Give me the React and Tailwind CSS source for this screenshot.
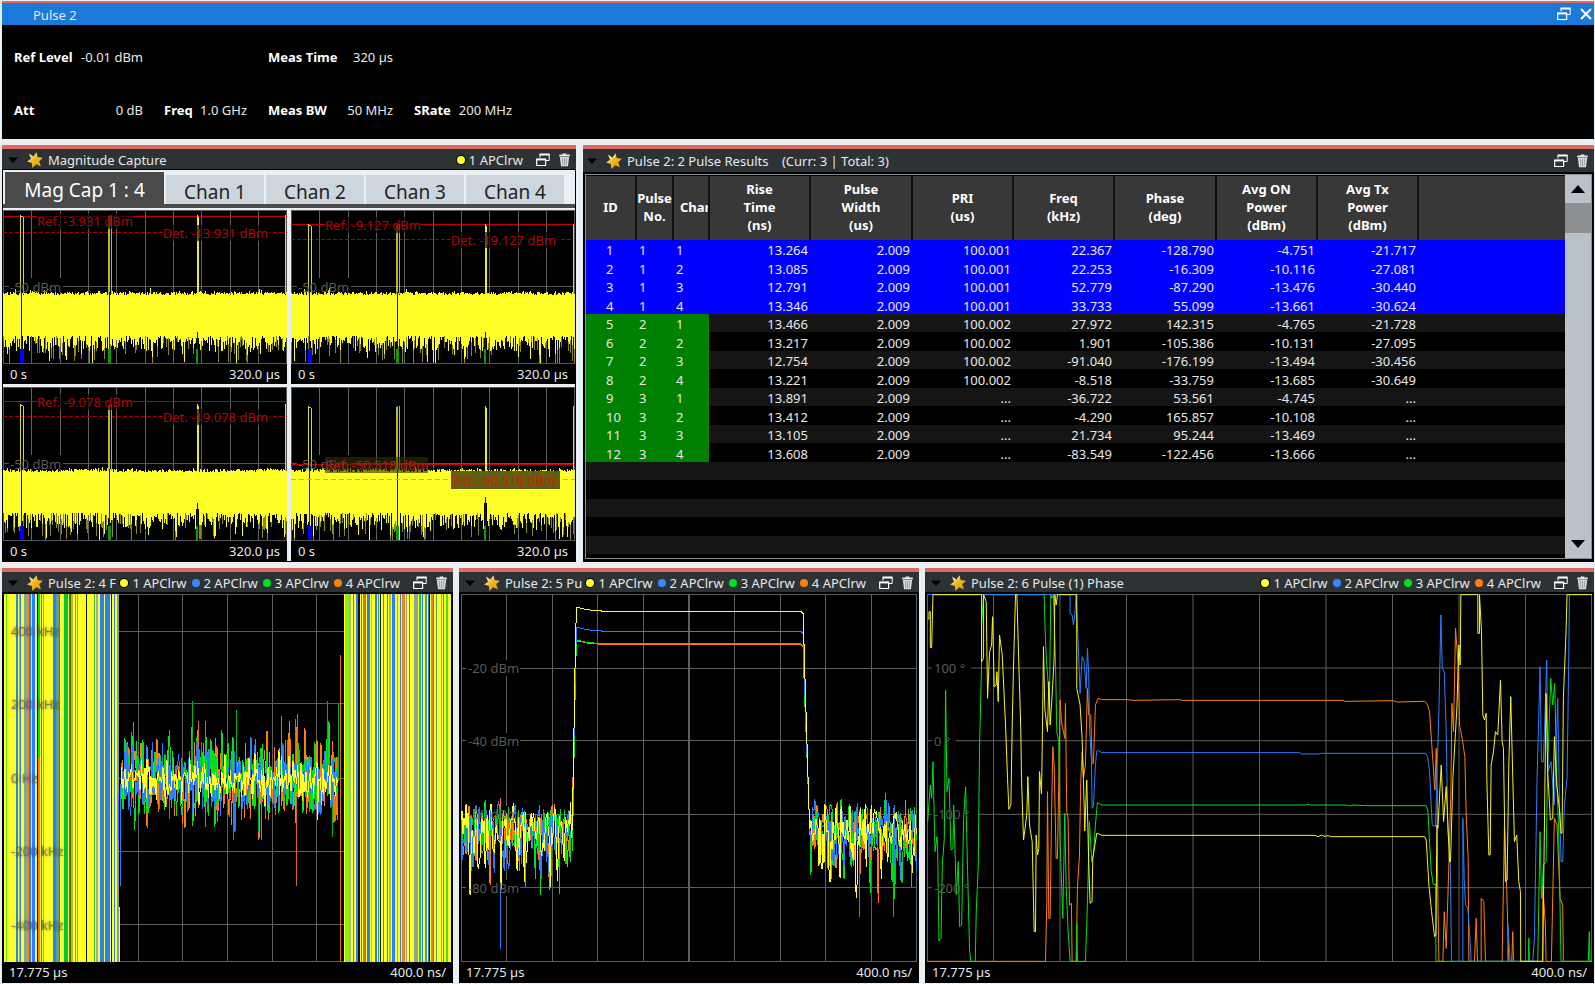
import clsx from 'clsx'

const YELLOW = '#ffff28'
const BLUE = '#2b7fff'
const GREEN = '#00e11e'
const ORANGE = '#ff7f0a'

// Small seeded generator so the noise looks the same on every render
function seeded(seed) {
  let s = seed
  return () => {
    s = (s * 1664525 + 1013904223) % 4294967296
    return s / 4294967296
  }
}

/* ---------- icons ---------- */

function StarIcon() {
  return (
    <svg viewBox="0 0 16 16" className="h-4 w-4 shrink-0" aria-hidden="true">
      <defs>
        <linearGradient id="star" x1="0" y1="0" x2="1" y2="1">
          <stop offset="0.15" stopColor="#fff6d0" />
          <stop offset="0.45" stopColor="#f2b61c" />
          <stop offset="1" stopColor="#e09a00" />
        </linearGradient>
      </defs>
      <path
        d="M2 1.6 6.3 4.4 9.6.3 10.6 5 16 5.8 12.2 9.2 14 14.6 9.2 12.2 5.4 16 4.8 11 .1 9.6 4 6.8Z"
        fill="url(#star)"
      />
    </svg>
  )
}

function RestoreIcon() {
  return (
    <svg viewBox="0 0 14 14" className="h-[14px] w-[14px]" fill="none" stroke="currentColor" aria-hidden="true">
      <path d="M4 4.5V1.5H13.2V7.5H10" strokeWidth="1" />
      <path d="M3.6 1.5H13.6" strokeWidth="2" />
      <path d="M.7 6.5H9.6V12.5H.7Z" strokeWidth="1.2" />
      <path d="M.2 6.4H10.1" strokeWidth="2" />
    </svg>
  )
}

function TrashIcon() {
  return (
    <svg viewBox="0 0 11 14" className="h-[14px] w-[11px]" aria-hidden="true">
      <path d="M3.6 1.6V.6H7.4V1.6H10.8V3.6H.2V1.6Z" fill="#e4e6e8" />
      <path d="M.9 4.1H10.1L9 13.2H2Z" fill="#dcdfe2" />
      <path d="M3.3 4.8 3.9 12.2M5.5 4.8V12.2M7.7 4.8 7.1 12.2" stroke="#7b8084" strokeWidth=".7" />
    </svg>
  )
}

/* ---------- panel chrome ---------- */

const CHANNELS = [
  { name: '1 APClrw', dot: 'bg-[#ffff28] h-[8px] w-[8px] ring-1 ring-black' },
  { name: '2 APClrw', dot: 'bg-[#3a86ff] h-[8px] w-[8px]' },
  { name: '3 APClrw', dot: 'bg-[#00e11e] h-[8px] w-[8px]' },
  { name: '4 APClrw', dot: 'bg-[#ff7f0a] h-[8px] w-[8px]' },
]

function Panel({ title, traces = 0, tall = false, children }) {
  return (
    <section className="flex min-w-0 flex-col border-t-4 border-[#df6b60] bg-black">
      <header className={clsx('flex items-center bg-[#2d3235] pr-[6px]', tall ? 'h-[23px] pl-[4px]' : 'h-[20px] pt-[1px] pl-[6px]')}>
        <button type="button" aria-label="Panel menu" className="flex h-4 w-[12px] shrink-0 items-center">
          <svg viewBox="0 0 10 6" className="h-[6px] w-[10px]" aria-hidden="true">
            <path d="M0 .5H10L5 6Z" fill="#000" />
          </svg>
        </button>
        <span className="w-[7px] shrink-0" />
        <StarIcon />
        <h2 className="ml-[5px] min-w-0 flex-1 overflow-hidden whitespace-pre">{title}</h2>
        <ul className="ml-[3px] flex shrink-0 gap-[5px]">
          {CHANNELS.slice(0, traces).map((c) => (
            <li key={c.name} className="flex items-center gap-[4px]">
              <span className={clsx('shrink-0 rounded-full', c.dot)} />
              {c.name}
            </li>
          ))}
        </ul>
        <button type="button" aria-label="Restore panel" className="ml-[13px] shrink-0 text-white">
          <RestoreIcon />
        </button>
        <button type="button" aria-label="Delete panel" className="ml-[9px] shrink-0">
          <TrashIcon />
        </button>
      </header>
      {children}
    </section>
  )
}

function XAxis({ left, right }) {
  return (
    <div className="flex h-[20px] items-center justify-between px-[7px]">
      <span>{left}</span>
      <span>{right}</span>
    </div>
  )
}

// y labels sit over the plot with a faint dark halo
function YLabel({ top, children }) {
  return (
    <span
      className="absolute left-[7px] -translate-y-1/2 text-[#707070d0] [text-shadow:0_0_3px_#0008]"
      style={{ top: `${top}%` }}
    >
      {children}
    </span>
  )
}

/* ---------- magnitude capture ---------- */

function magNoise(seed, bump) {
  const rnd = seeded(seed)
  let solid = ''
  let dim = ''
  for (let x = 0; x < 284; x++) {
    const top = 81 + Math.round(rnd() * 3) + (rnd() > 0.8 ? 0 : 1) - (rnd() > 0.98 ? 3 : 0)
    let bottom = 126 + Math.round(Math.pow(rnd(), 1.6) * 16)
    if (rnd() > 0.88) bottom += Math.round(rnd() * 18)
    if (x > 192 && x < 196) bottom = bump
    solid += `M${x + 0.5} ${top}V${Math.min(bottom, 153)}`
    if (rnd() > 0.76) dim += `M${x + 0.5} 125V${Math.min(bottom + 4 + Math.round(rnd() * 14), 153)}`
  }
  return { solid, dim }
}

function MagPlot({ seed, refText, detText, refY, detY, pulseTop, bump, boxed }) {
  const noise = magNoise(seed, bump)
  return (
    <div className="min-w-0 bg-black">
      <div className="relative">
        <svg viewBox="0 0 284 154" preserveAspectRatio="none" className="block h-[154px] w-full" shapeRendering="crispEdges" fill="none">
          <path d="M.5 0V154M283.5 0V154M0 .5H284M0 153.5H284M0 76.5H284" stroke="#555" />
          {[28, 57, 85, 113, 142, 170, 198, 227, 255].map((x) => (
            <path key={x} d={`M${x + 0.5} 0V154`} stroke="#606060" />
          ))}
          <path d="M6 68H60V82H6Z" fill="#000" />
          <path d={`M0 ${refY + 0.5}H284`} stroke="#c40000" />
          {!boxed && <path d={`M0 ${detY + 0.5}H284`} stroke="#a80000" strokeDasharray="4 2" />}
          <path d={noise.dim} stroke="#8a8a10" />
          <path d={noise.solid} stroke={YELLOW} />
          <path d={`M17.5 ${pulseTop}V84M18 ${pulseTop + 1.5}H20M20.5 ${pulseTop + 2}V84`} stroke="#d8d820" />
          <path d={`M105.5 ${pulseTop + 1}V84M106.5 ${pulseTop}V84M108.5 ${pulseTop}V84`} stroke="#b8b81c" />
          <path d={`M194.5 ${pulseTop}V84M195.5 ${pulseTop + 2}V84`} stroke="#f0f022" />
          <path d={`M282.5 ${pulseTop}V84`} stroke="#d8d820" />
          <path d="M18.5 82V140M106.5 82V140" stroke="#1e1e00" />
          <path d={`M194.5 ${bump - 6}V140`} stroke="#1e1e00" />
          {boxed && <path d={`M0 ${detY + 0.5}H284`} stroke="#ff9a1e" strokeDasharray="5 3" />}
          <path d="M17 138.5h4v14.5h-4z" fill="#0000ff" />
          <path d="M105 138.5h3v14.5h-3zM193 138.5h2v14.5h-2z" fill="#0a9a0a" />
        </svg>
        <YLabel top={50}>-50 dBm</YLabel>
        <span
          className={clsx(
            'absolute left-[34px] -translate-y-1/2 leading-4',
            boxed ? 'bg-[#30300899] text-[#c01010]' : 'bg-[#000000a0] text-[#a80808]',
          )}
          style={{ top: `${(Math.max(refY + 1, 11) / 154) * 100}%` }}
        >
          {refText}
        </span>
        <span
          className={clsx(
            'absolute right-[15px] -translate-y-1/2 pr-[4px]',
            boxed ? 'bg-[#5f5f10] leading-[18px] text-[#c82008]' : 'bg-[#000000a0] leading-4 text-[#a80808]',
          )}
          style={{ top: `${((detY + 1) / 154) * 100}%` }}
        >
          {detText}
        </span>
      </div>
      <XAxis left="0 s" right="320.0 µs" />
    </div>
  )
}

const CAPTURES = [
  { seed: 11, refText: 'Ref. -3.931 dBm', detText: 'Det. -13.931 dBm', refY: 6, detY: 22, pulseTop: 5, bump: 128 },
  { seed: 23, refText: 'Ref. -9.127 dBm', detText: 'Det. -19.127 dBm', refY: 14, detY: 29, pulseTop: 14, bump: 128 },
  { seed: 37, refText: 'Ref. -9.078 dBm', detText: 'Det. -19.078 dBm', refY: 14, detY: 29, pulseTop: 17, bump: 122 },
  { seed: 51, refText: 'Ref. -50.518 dBm', detText: 'Det. -60.518 dBm', refY: 77, detY: 92, pulseTop: 19, bump: 116, boxed: true },
]

function MagnitudeCapture() {
  return (
    <Panel title="Magnitude Capture" traces={1}>
      <div className="mx-[1px] mt-[1px] mb-[1px] bg-[#e9eff3]">
        <div className="flex items-end border-b-4 border-[#4a4a4a] pt-[2px] pl-[2px]" role="tablist">
          <button type="button" role="tab" aria-selected="true" className="h-[32px] grow-[159] basis-0 bg-[#4a4a4a] pt-[3px] text-[19px] text-white">
            Mag Cap 1 : 4
          </button>
          {[1, 2, 3, 4].map((n) => (
            <button
              key={n}
              type="button"
              role="tab"
              aria-selected="false"
              className="ml-[2px] h-[29px] grow-[98] basis-0 bg-[#cdd5dd] pt-[5px] text-[19px] leading-6 text-[#222]"
            >
              Chan {n}
            </button>
          ))}
          <span className="w-[11px]" />
        </div>
        <div className="mt-[2px] grid grid-cols-2 gap-x-[4px] gap-y-[3px]">
          {CAPTURES.map((c) => (
            <MagPlot key={c.seed} {...c} />
          ))}
        </div>
      </div>
    </Panel>
  )
}

/* ---------- results table ---------- */

const COLUMNS = [
  { lines: ['ID'], width: 'w-[50px]' },
  { lines: ['Pulse', 'No.'], width: 'w-[37px]' },
  { lines: ['Chan'], width: 'w-[36px]' },
  { lines: ['Rise', 'Time', '(ns)'], width: 'w-[101px]' },
  { lines: ['Pulse', 'Width', '(us)'], width: 'w-[102px]' },
  { lines: ['PRI', '(us)'], width: 'w-[101px]' },
  { lines: ['Freq', '(kHz)'], width: 'w-[101px]' },
  { lines: ['Phase', '(deg)'], width: 'w-[102px]' },
  { lines: ['Avg ON', 'Power', '(dBm)'], width: 'w-[101px]' },
  { lines: ['Avg Tx', 'Power', '(dBm)'], width: 'w-[101px]' },
]

const RESULTS = [
  ['1', '1', '1', '13.264', '2.009', '100.001', '22.367', '-128.790', '-4.751', '-21.717'],
  ['2', '1', '2', '13.085', '2.009', '100.001', '22.253', '-16.309', '-10.116', '-27.081'],
  ['3', '1', '3', '12.791', '2.009', '100.001', '52.779', '-87.290', '-13.476', '-30.440'],
  ['4', '1', '4', '13.346', '2.009', '100.001', '33.733', '55.099', '-13.661', '-30.624'],
  ['5', '2', '1', '13.466', '2.009', '100.002', '27.972', '142.315', '-4.765', '-21.728'],
  ['6', '2', '2', '13.217', '2.009', '100.002', '1.901', '-105.386', '-10.131', '-27.095'],
  ['7', '2', '3', '12.754', '2.009', '100.002', '-91.040', '-176.199', '-13.494', '-30.456'],
  ['8', '2', '4', '13.221', '2.009', '100.002', '-8.518', '-33.759', '-13.685', '-30.649'],
  ['9', '3', '1', '13.891', '2.009', '...', '-36.722', '53.561', '-4.745', '...'],
  ['10', '3', '2', '13.412', '2.009', '...', '-4.290', '165.857', '-10.108', '...'],
  ['11', '3', '3', '13.105', '2.009', '...', '21.734', '95.244', '-13.469', '...'],
  ['12', '3', '4', '13.608', '2.009', '...', '-83.549', '-122.456', '-13.666', '...'],
]

const ROW = 'leading-[16px] odd:h-[18px] even:h-[19px] odd:bg-[#151515] even:bg-black'

function PulseResults() {
  return (
    <Panel title="Pulse 2: 2 Pulse Results    (Curr: 3 | Total: 3)" tall>
      <div className="mx-[2px] mt-[2px] mb-[3px] flex flex-1 border border-[#8b8f92]">
        <div className="min-w-0 flex-1 pt-[1px]">
          <table className="w-full table-fixed border-collapse">
            <thead>
              <tr className="h-[64px] bg-[#383838] text-white">
                {COLUMNS.map((c) => (
                  <th
                    key={c.lines.join(' ')}
                    scope="col"
                    className={clsx('overflow-hidden border-r-2 border-[#111] p-0 pb-[2px] leading-[18px] font-bold', c.width, c.lines[0] === 'Chan' && 'pl-[6px]')}
                  >
                    {c.lines.map((l) => (
                      <span key={l} className="block">{l}</span>
                    ))}
                  </th>
                ))}
                <td />
              </tr>
            </thead>
            <tbody>
              {RESULTS.map((row, r) => (
                <tr key={row[0]} className={clsx(ROW, r < 4 && 'odd:bg-[#0000ff]! even:bg-[#0000ff]!')}>
                  {row.map((cell, i) => (
                    <td
                      key={i}
                      className={clsx(
                        'p-0 pt-[2px]',
                        i === 0 && 'pl-[20px]',
                        (i === 1 || i === 2) && 'pl-[3px]',
                        i > 2 && 'pr-[2px] text-right',
                        i < 3 && r > 3 && 'bg-[#008000]',
                      )}
                    >
                      {cell}
                    </td>
                  ))}
                  <td />
                </tr>
              ))}
              {[0, 1, 2, 3, 4].map((n) => (
                <tr key={n} className={ROW}>
                  <td colSpan={11} />
                </tr>
              ))}
            </tbody>
          </table>
        </div>
        <div className="flex w-[26px] flex-col bg-[#b9c1c9]">
          <button type="button" aria-label="Scroll up" className="flex h-[28px] items-center justify-center">
            <svg viewBox="0 0 14 8" className="h-[8px] w-[14px]" aria-hidden="true"><path d="M0 8H14L7 0Z" /></svg>
          </button>
          <span className="h-[30px] bg-[#8c9093]" />
          <button type="button" aria-label="Scroll down" className="mt-auto flex h-[28px] items-center justify-center">
            <svg viewBox="0 0 14 8" className="h-[8px] w-[14px]" aria-hidden="true"><path d="M0 0H14L7 8Z" /></svg>
          </button>
        </div>
      </div>
    </Panel>
  )
}

/* ---------- pulse plots (drawn at three units per pixel) ---------- */

function TracePlot({ width, labels, rows, children }) {
  return (
    <>
      <div className="relative mx-[2px] mt-[2px]">
        <svg viewBox={`0 0 ${width} 1104`} preserveAspectRatio="none" className="block h-[368px] w-full" shapeRendering="crispEdges" fill="none">
          <g stroke="#5e5e5e" strokeWidth="3">
            <rect x="1.5" y="1.5" width={width - 3} height="1101" />
            {[1, 2, 3, 4, 5, 6, 7, 8, 9].map((n) => (
              <path key={n} d={`M${(width * n) / 10} 0V1104`} />
            ))}
            {rows.map((y) => (
              <path key={y} d={`M0 ${y}H${width}`} />
            ))}
          </g>
          {rows.map((y, i) => (
            <rect key={y} x="14" y={y - 24} width={labels[i].length * 22 + 8} height="48" fill="#000" />
          ))}
          {children}
        </svg>
        {labels.map((l, i) => (
          <YLabel key={l} top={(rows[i] / 1104) * 100}>{l}</YLabel>
        ))}
      </div>
      <div className="pb-[1px]">
        <XAxis left="17.775 µs" right="400.0 ns/" />
      </div>
    </>
  )
}

// [x, width, colour] bands over the saturated part of the frequency plot
const BANDS = [
  [5, 3, '#66dd22'], [36, 6, BLUE], [45, 4, '#d09a60'], [49, 3, BLUE], [60, 13, '#8aa890'], [73, 3, ORANGE], [76, 5, BLUE],
  [84, 9, BLUE], [99, 3, '#111'], [110, 3, BLUE], [117, 4, '#8aa890'], [146, 10, BLUE], [156, 8, '#5f9f90'],
  [165, 4, '#4f8f40'], [180, 13, '#00c832'], [194, 4, '#7a5a10'], [198, 4, '#4a6a10'], [202, 6, '#b0c020'], [212, 4, '#9a9a50'],
  [219, 3, '#50d020'], [247, 3, '#111'], [271, 3, '#50b030'], [275, 8, '#9ab0a8'], [288, 12, BLUE], [302, 6, BLUE],
  [310, 4, BLUE], [316, 3, BLUE], [320, 3, '#111'], [330, 4, BLUE], [340, 4, '#7a9ab0'],
  [1023, 13, '#8aee20'], [1036, 6, '#b0b860'], [1048, 3, BLUE], [1057, 5, BLUE], [1063, 4, '#111'], [1072, 3, BLUE],
  [1077, 8, '#c87830'], [1088, 10, BLUE], [1102, 3, '#c0c060'], [1114, 4, BLUE], [1123, 3, '#30b040'], [1128, 3, '#222'],
  [1138, 3, BLUE], [1150, 3, BLUE], [1154, 7, '#a0cc30'], [1164, 9, BLUE], [1178, 4, '#90c030'], [1188, 4, BLUE],
  [1194, 10, '#f08018'], [1206, 3, '#90a890'], [1216, 3, BLUE], [1229, 13, '#8aa890'], [1246, 4, '#20c040'], [1254, 3, BLUE],
  [1263, 5, '#40b060'], [1272, 4, BLUE], [1276, 3, '#111'], [1281, 6, '#f08018'], [1287, 4, BLUE], [1295, 3, '#50a070'],
  [1311, 3, '#a0a890'], [1318, 3, BLUE], [1327, 4, '#50e020'],
]

function gauss(rnd) {
  return rnd() + rnd() + rnd() + rnd() - 2
}

function freqNoise(seed, amp) {
  const rnd = seeded(seed)
  let d = ''
  for (let x = 351; x <= 1002; x += 2) {
    const spike = rnd() > 0.93 ? 1.7 : 1
    d += `${d ? 'L' : 'M'}${x} ${Math.round(558 + gauss(rnd) * amp * spike)}`
  }
  return d
}

function FrequencyPlot() {
  return (
    <Panel title="Pulse 2: 4 F" traces={4}>
      <TracePlot width={1341} rows={[111, 329, 553, 772, 992]} labels={['400 kHz', '200 kHz', '0 Hz', '-200 kHz', '-400 kHz']}>
        <path d="M0 0H345V940H348V1104H0ZM1021 0H1341V1104H1001V930H1003V1104H1021Z" fill={YELLOW} />
        {BANDS.map(([x, w, fill]) => (
          <rect key={x} x={x} width={w} height="1104" fill={fill} />
        ))}
        <path d="M102 0h7V493h-7z" fill={GREEN} />
        <path d="M102 493h7V1104h-7z" fill={ORANGE} />
        <path d="M344 600V740M349 570V875" stroke={BLUE} strokeWidth="3" />
        <g strokeWidth="3">
          <path d={freqNoise(5, 112)} stroke={ORANGE} />
          <path d="M1010 1104V184M876 600V875M873 570V375M880 560V361M389 560V384M583 560V380M605 560V380" stroke="#e06a08" />
          <path d={freqNoise(8, 100)} stroke={GREEN} />
          <path d="M565 560V322M697 560V348M969 560V322M1004 560V330M689 560V737M764 560V715M985 560V728" stroke="#00b81a" />
          <path d={freqNoise(13, 80)} stroke={BLUE} />
          <path d={freqNoise(21, 50)} stroke={YELLOW} />
        </g>
      </TracePlot>
    </Panel>
  )
}

function floorNoise(rnd, from, to) {
  let d = ''
  for (let x = from; x <= to; x += 3) {
    const power = -Math.log(rnd() + 0.0001)
    const y = Math.min(965, Math.max(598, 692 - 108 * Math.log10(power + 0.006)))
    d += `L${x} ${Math.round(y)}`
  }
  return d
}

function magnitudeTrace(seed, level) {
  const rnd = seeded(seed)
  const left = floorNoise(rnd, 0, 333).replace('L', 'M')
  const top = `L342 ${level + 100}L345 ${level - 9}L352 ${level - 10}L375 ${level - 4}L420 ${level}H1015L1023 ${level + 8}L1026 ${level + 130}L1040 640`
  return left + top + floorNoise(rnd, 1043, 1362)
}

function MagnitudePlot() {
  return (
    <Panel title="Pulse 2: 5 Pu" traces={4}>
      <TracePlot width={1363} rows={[222, 440, 661, 881]} labels={['-20 dBm', '-40 dBm', '-60 dBm', '-80 dBm']}>
        <g strokeWidth="3">
          <path d={magnitudeTrace(3, 151)} stroke={ORANGE} />
          <path d={magnitudeTrace(17, 149)} stroke={GREEN} />
          <path d={magnitudeTrace(29, 111)} stroke={BLUE} />
          <path d="M118 700V1066M1190 700V970M1294 700V968" stroke={BLUE} />
          <path d={magnitudeTrace(42, 51)} stroke={YELLOW} />
        </g>
      </TracePlot>
    </Panel>
  )
}

const PHASE_TRACES = [
  {
    colour: ORANGE,
    d: 'M22 1189H376L380 1010 382 680 386 1060 390 1060 394 760 398 545 402 600 408 880 412 880 416 640 420 405 424 470 430 500 434 520 436 415 440 740 444 760 448 1020 454 1015 456 1189H468L472 970 478 870 482 650 486 560 490 640 496 600 502 370 506 450 512 450 516 595 520 595 526 420 534 400 545 404H620L640 406 780 404 785 406H1270L1275 409 1420 407 1432 411 1515 409 1522 415 1530 440 1540 590 1546 675 1550 550 1553 695 1554 930 1558 1189H1570L1574 1040 1580 1150 1588 900 1594 680 1597 415 1602 500 1608 190 1616 300 1620 480 1628 520 1636 575 1640 750 1646 880 1648 1189H1665L1670 1060 1674 1189H1685V1000L1693 1010 1698 1189H1748L1755 780 1762 980 1768 1189H1777L1780 1100 1782 1189H1870V960L1878 1080 1880 1189H1896L1905 760 1913 780 1922 1000 1930 1020 1932 1189H2018',
  },
  {
    colour: GREEN,
    d: 'M22 770L30 660 34 700 38 590 44 860 50 815 52 860 56 1128 62 1120 66 900 72 820 76 375 80 680 86 640 92 855 98 850 100 720 104 850 108 990 114 890 118 1085 124 1080 130 760 136 665 142 920 148 1160 152 1189H165L168 1040 174 900 178 540 184 300 184 180 190 89H372L376 230 380 300 388 410 392 90 396 100 400 89 406 290 410 500 416 530 420 830 428 1060 434 745 438 960 444 1100 450 1189H470V1075L472 1189H496L500 1080 504 940 508 770 515 890 520 870 526 780 532 713 545 720H1160L1165 718 1170 720H1280L1290 723 1300 720 1340 722 1400 722 1520 722 1525 740 1535 920 1541 958 1549 958 1549 1189H1828V1120L1830 1189H1855L1862 800 1866 1000 1872 900 1880 890 1885 600 1894 340 1900 420 1906 355 1912 640 1918 800 1925 1189H2007L2010 1100 2012 1189H2018',
  },
  {
    colour: BLUE,
    d: 'M22 89H450V145L456 150 460 180 464 150 468 89 474 230 480 385 486 275 492 290 498 370 502 250 506 330 508 480 514 590 516 730 520 725 526 600 530 558 535 557 545 563H1140L1145 567 1195 567 1205 565H1518L1524 575 1530 620 1538 780 1548 785 1553 600 1558 440 1564 150 1568 310 1574 320 1580 500 1585 800 1592 870 1596 1189H1630V760L1634 940 1638 1020 1645 1030 1650 1100 1655 1189H1765V1075L1772 1189H1840L1845 1120 1853 640 1862 305 1866 590 1872 590 1882 285 1886 620 1895 590 1905 720 1915 400 1920 700 1925 890 1930 890 1935 720 1943 640 1948 300 1950 89',
  },
  {
    colour: '#f4f426',
    d: 'M22 162H26V140H30V248H34L38 89H184V290L190 280 190 89 198 110 202 400 208 260 214 240 217 155 222 365 228 360 230 320 234 410 238 210 246 270 256 480 262 640 266 733 272 720 276 480 280 300 286 89 290 89 296 300 302 500 304 640 310 825 316 780 320 745 323 635 328 780 336 830 342 1100 346 1100 348 810 352 870 356 850 358 620 364 687 366 560 370 245 374 430 382 500 386 350 390 480 396 390 402 280 404 89 408 120 412 89H470V370L480 420 486 520 490 640 494 798 500 645 506 900 510 1015 516 1010 518 880 530 805 540 808 545 811H1185L1195 815 1205 810 1215 814 1225 812 1235 815H1515L1520 825 1528 960 1536 1040 1545 1115 1549 1110 1552 780 1555 790 1565 600 1572 770 1580 665 1590 890 1593 890 1600 640 1612 430 1618 240 1622 300 1624 89H1675V205H1680V89L1686 200 1690 450 1695 465 1700 445 1702 640 1708 870 1712 870 1715 600 1722 560 1728 500 1735 510 1743 345 1748 530 1752 550 1758 950 1763 945 1768 600 1774 395 1780 640 1785 830 1792 810 1798 950 1803 980 1804 1189H1870L1876 700 1880 385 1885 620 1893 765 1900 760 1905 515 1912 660 1920 730 1925 805 1928 805 1932 400 1940 200 1943 89H2018',
  },
]

function PhasePlot() {
  return (
    <Panel title="Pulse 2: 6 Pulse (1) Phase" traces={4}>
      <TracePlot width={1998} rows={[222, 440, 661, 881]} labels={['100 °', '0 °', '-100 °', '-200 °']}>
        <g strokeWidth="3" transform="translate(-20 -87)">
          {PHASE_TRACES.map((t) => (
            <path key={t.colour} d={t.d} stroke={t.colour} />
          ))}
        </g>
      </TracePlot>
    </Panel>
  )
}

/* ---------- instrument header ---------- */

function Setting({ label, value }) {
  return (
    <div className="flex justify-between">
      <dt className="font-bold text-white">{label}</dt>
      <dd>{value}</dd>
    </div>
  )
}

export default function App() {
  return (
    <main className="flex min-h-screen flex-col gap-[6px] bg-[#e9eff3] pt-[1px] pr-[1px] pl-[2px] font-['Noto_Sans','Open_Sans',sans-serif] text-[13px] leading-[18px] text-[#e8e8e8]">
      <section className="border-t-2 border-[#df6b60] bg-black">
        <header className="flex h-[22px] items-center bg-[#1b79d8] pr-[2px] pl-[31px]">
          <h1 className="flex-1 pt-[2px]">Pulse 2</h1>
          <button type="button" aria-label="Restore window" className="text-white">
            <RestoreIcon />
          </button>
          <button type="button" aria-label="Close window" className="ml-[9px] text-white">
            <svg viewBox="0 0 12 12" className="h-[12px] w-[12px]" aria-hidden="true">
              <path d="M1 1 11 11M11 1 1 11" stroke="currentColor" strokeWidth="2" />
            </svg>
          </button>
        </header>
        <dl className="grid h-[114px] grid-cols-[129px_83px_125px_98px] content-start gap-x-[21px] gap-y-[35px] pt-[23px] pl-[12px]">
          <Setting label="Ref Level" value="-0.01 dBm" />
          <div className="col-start-3">
            <Setting label="Meas Time" value="320 µs" />
          </div>
          <div className="col-start-1">
            <Setting label="Att" value="0 dB" />
          </div>
          <Setting label="Freq" value="1.0 GHz" />
          <Setting label="Meas BW" value="50 MHz" />
          <Setting label="SRate" value="200 MHz" />
        </dl>
      </section>

      <div className="grid grid-cols-[574fr_1011fr] gap-[7px]">
        <MagnitudeCapture />
        <PulseResults />
      </div>

      <div className="grid grid-cols-[451fr_460fr_669fr] gap-[6px]">
        <FrequencyPlot />
        <MagnitudePlot />
        <PhasePlot />
      </div>
    </main>
  )
}
